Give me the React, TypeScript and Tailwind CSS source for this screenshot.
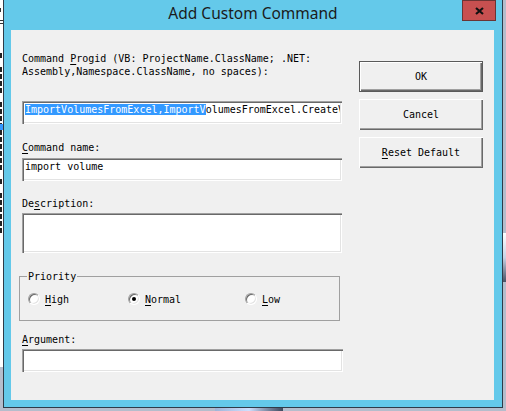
import type React from "react";

const mono = "font-['DejaVu_Sans_Mono',monospace] text-[10px] leading-[13px] text-black";
const sunken =
	"bg-white p-[2px] shadow-[inset_1px_1px_0_#a0a0a0,inset_2px_2px_0_#696969,inset_-1px_-1px_0_#ffffff,inset_-2px_-2px_0_#e3e3e3]";
const raised =
	"bg-[#f0f0f0] shadow-[inset_1px_1px_0_#ffffff,inset_-1px_-1px_0_#696969,inset_-2px_-2px_0_#a0a0a0]";

// rows of the window peeking out on the left edge
const behind = "..x.xxxx.xxxxxxxxxx.x.xxxxxx";

const Key = ({ children }: { children: React.ReactNode }) => (
	<span className="underline decoration-1 underline-offset-2">{children}</span>
);

const Radio = ({
	checked,
	className,
	children,
}: {
	checked?: boolean;
	className?: string;
	children: React.ReactNode;
}) => (
	<label className={`flex items-center gap-[5px] ${className ?? ""}`}>
		<span className="flex h-[12px] w-[12px] items-center justify-center rounded-full border border-t-[#a0a0a0] border-l-[#a0a0a0] border-r-white border-b-white bg-white shadow-[inset_1px_1px_0_#696969,inset_-1px_-1px_0_#e3e3e3]">
			{checked && <span className="h-[4px] w-[4px] rounded-full bg-black" />}
		</span>
		<span className={mono}>{children}</span>
	</label>
);

const Button = ({
	primary,
	children,
}: {
	primary?: boolean;
	children: React.ReactNode;
}) => (
	<button
		className={`flex h-[31px] w-[124px] items-center justify-center ${raised} ${
			primary ? "border border-[#5a5a5a]" : ""
		} ${mono}`}
	>
		{children}
	</button>
);

const LeftStrip = () => (
	<div className="flex h-[367px] w-[3px] flex-col bg-white">
		<div className="mt-[8px] h-[4px] w-[1px] bg-[#333]" />
		<div className="mt-[8px] h-[1px] w-[3px] bg-[#333]" />
		<div className="mt-[2px] h-[1px] w-[3px] bg-[#333]" />
		<div className="mt-[14px] flex flex-col">
			{behind.split("").map((c, i) => (
				<div key={i} className="flex h-[7px] items-center">
					{c === "x" && <div className="h-[5px] w-[2px] bg-[#222]" />}
				</div>
			))}
		</div>
		<div className="-mt-[110px] h-[6px] w-[3px] bg-[#3399ff]" />
	</div>
);

const TitleBar = () => (
	<div className="grid h-[30px] grid-cols-[40px_1fr_40px]">
		<div />
		<div className="pt-[3px] text-center font-['Noto_Sans',sans-serif] text-[15.5px] leading-[21px] text-[#1b1b1b]">
			Add Custom Command
		</div>
		<div className="flex h-[21px] w-[34px] items-center justify-center border border-[#6b3434] bg-[#c75050]">
			<svg width="9" height="8" viewBox="0 0 9 8">
				<path d="M1 1 L8 7 M8 1 L1 7" stroke="#111" strokeWidth="2.2" />
			</svg>
		</div>
	</div>
);

export default function App() {
	return (
		<div className="flex h-[411px] w-[506px] flex-col overflow-hidden bg-[#b5bdcc]">
			<div className="flex h-[408px]">
				<LeftStrip />
				<div className="flex w-[500px] flex-col border-x border-b border-[#2f3b48] bg-[#64c9ea]">
					<TitleBar />
					<div className="ml-[7px] flex h-[370px] w-[483px] bg-[#f0f0f0]">
						<div className="flex w-[331px] flex-col pl-[11px] pt-[22px]">
							<p className={mono}>
								Command <Key>P</Key>rogid (VB: ProjectName.ClassName; .NET:
								<br />
								Assembly,Namespace.ClassName, no spaces):
							</p>
							<div className={`mt-[23px] h-[23px] w-[320px] ${sunken}`}>
								<div className={`h-full overflow-hidden whitespace-nowrap pl-[1px] ${mono}`}>
									<span className="bg-[#3399ff] text-white">
										ImportVolumesFromExcel,ImportV
									</span>
									olumesFromExcel.CreateVolumes
								</div>
							</div>

							<p className={`mt-[17px] ${mono}`}>
								<Key>C</Key>ommand name:
							</p>
							<div className={`mt-[4px] h-[23px] w-[320px] ${sunken}`}>
								<div className={`h-full overflow-hidden whitespace-nowrap pl-[1px] ${mono}`}>
									import volume
								</div>
							</div>

							<p className={`mt-[16px] ${mono}`}>
								De<Key>s</Key>cription:
							</p>
							<div className={`mt-[3px] h-[40px] w-[320px] ${sunken}`} />

							<fieldset className="-ml-[3px] mt-[17px] w-[321px] border border-[#a0a0a0] pb-[14px]">
								<legend className={`ml-[7px] px-[1px] ${mono}`}>Priority</legend>
								<div className="flex h-[14px] items-center pl-[8px] pt-[9px] box-content">
									<Radio className="w-[100px]">
										<Key>H</Key>igh
									</Radio>
									<Radio checked className="w-[117px]">
										<Key>N</Key>ormal
									</Radio>
									<Radio>
										<Key>L</Key>ow
									</Radio>
								</div>
							</fieldset>

							<p className={`mt-[12px] ${mono}`}>
								<Key>A</Key>rgument:
							</p>
							<div className={`mt-[3px] h-[23px] w-[321px] ${sunken}`} />
						</div>

						<div className="ml-[17px] flex w-[124px] flex-col gap-[7px] pt-[31px]">
							<Button primary>OK</Button>
							<Button>Cancel</Button>
							<Button>
								<Key>R</Key>eset Default
							</Button>
						</div>
					</div>
				</div>
				<div className="flex w-[3px] flex-col">
					<div className="mt-[233px] h-[49px] w-[3px] bg-gradient-to-b from-[#ffffff] via-[#c9d3e6] to-[#4a5366]" />
				</div>
			</div>
			<div className="ml-[215px] h-[3px] w-[68px] bg-gradient-to-r from-[#9fb4d8] via-[#cfe0ff] to-[#3f4a5e]" />
		</div>
	);
}
